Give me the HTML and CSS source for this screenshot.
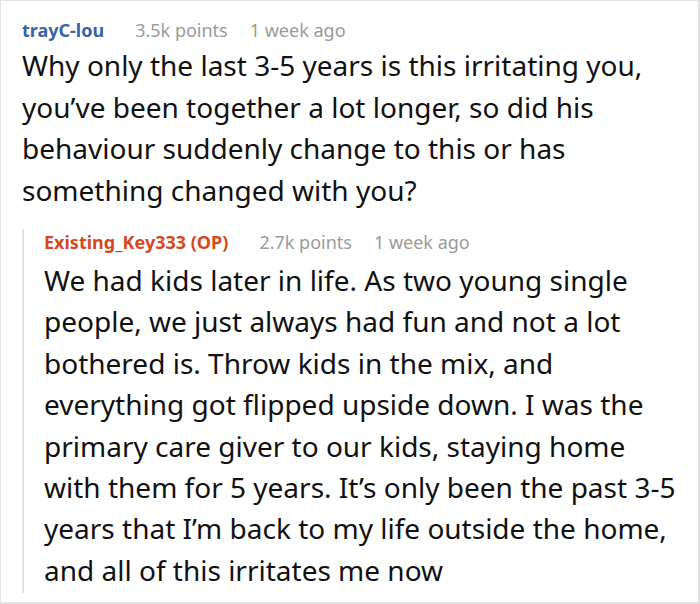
FILE: index.html
```html
<!DOCTYPE html>
<html>
<head>
<meta charset="utf-8">
<link rel="stylesheet" href="styles.css">
</head>
<body>
<div class="frame">
  <div class="comment">
    <div class="meta">
      <span class="author">trayC-lou</span>
      <span class="info">3.5k points</span>
      <span class="info">1 week ago</span>
    </div>
    <p class="text">Why only the last 3-5 years is this irritating you, you’ve been together a lot longer, so did his behaviour suddenly change to this or has something changed with you?</p>
    <div class="reply">
      <div class="meta">
        <span class="author op">Existing_Key333 (OP)</span>
        <span class="info">2.7k points</span>
        <span class="info">1 week ago</span>
      </div>
      <p class="text reply-text">We had kids later in life. As two young single people, we just always had fun and not a lot bothered is. Throw kids in the mix, and everything got flipped upside down. I was the primary care giver to our kids, staying home with them for 5 years. It’s only been the past 3-5 years that I’m back to my life outside the home, and all of this irritates me now</p>
    </div>
  </div>
</div>
</body>
</html>
```
FILE: styles.css
```css
html, body {
  margin: 0;
  padding: 0;
  background: #fff;
}
body {
  font-family: "Noto Sans", "DejaVu Sans", sans-serif;
  color: #111;
}
.frame {
  width: 700px;
  height: 604px;
  box-sizing: border-box;
  border: 1px solid #e2e2e2;
  border-right-width: 2px;
  border-bottom-width: 2px;
  overflow: hidden;
}
.comment {
  padding: 16px 14px 0 21px;
}
.meta {
  display: flex;
  gap: 22px;
  font-size: 18px;
  line-height: 26px;
}
.author {
  font-weight: 700;
  color: #3a62a6;
  margin-right: 9px;
}
.author.op {
  color: #d4491c;
}
.info {
  color: #9a9a9a;
}
.text {
  margin: 0;
  font-size: 28px;
  line-height: 41.5px;
  padding-top: 2px;
}
.reply-text {
  line-height: 41.4px;
  padding-top: 5px;
  padding-bottom: 2px;
}
.reply {
  margin-top: 18px;
  border-left: 2px solid #e4e4e4;
  padding-left: 20px;
}
```
